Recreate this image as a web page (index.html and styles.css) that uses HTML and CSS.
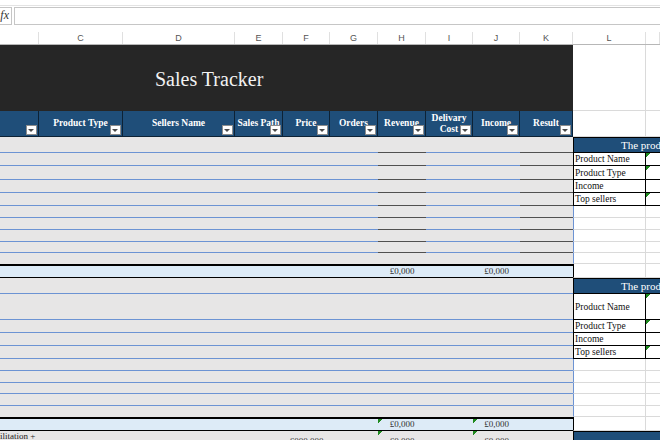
FILE: index.html
```html
<html>
  <head>
    <meta charset="utf-8" />
    <link rel="stylesheet" href="styles.css">
  </head>
  <body>
    <div class="fbar">
      <div class="fx">fx</div>
      <div class="finput"></div>
    </div>

    <div class="row cols">
      <div></div><div>C</div><div>D</div><div>E</div><div>F</div><div>G</div>
      <div>H</div><div>I</div><div>J</div><div>K</div><div>L</div><div></div>
    </div>

    <div class="row h66">
      <div class="title">Sales Tracker</div>
      <div class="gl"></div><div class="gm"></div>
    </div>

    <div class="row h26">
      <div class="th"><span class="dd"></span></div>
      <div class="th"><span class="tx">Product Type</span><span class="dd"></span></div>
      <div class="th"><span class="tx">Sellers Name</span><span class="dd"></span></div>
      <div class="th"><span class="tx">Sales Path</span><span class="dd"></span></div>
      <div class="th"><span class="tx">Price</span><span class="dd"></span></div>
      <div class="th"><span class="tx">Orders</span><span class="dd"></span></div>
      <div class="th"><span class="tx">Revenue</span><span class="dd"></span></div>
      <div class="th"><span class="tx">Delivary<br>Cost</span><span class="dd"></span></div>
      <div class="th"><span class="tx">Income</span><span class="dd"></span></div>
      <div class="th"><span class="tx">Result</span><span class="dd"></span></div>
      <div class="gl"></div><div class="gm"></div>
    </div>

    <!-- first block -->
    <div class="row h16">
      <div class="d s6"></div><div class="d dk"></div><div class="d s2"></div><div class="d dk"></div>
      <div class="ph">The product details</div>
    </div>
    <div class="row h13">
      <div class="d s6"></div><div class="d dk"></div><div class="d s2"></div><div class="d dk"></div>
      <div class="pl">Product Name</div><div class="pv tri"></div>
    </div>
    <div class="row h14">
      <div class="d s6"></div><div class="d dk"></div><div class="d s2"></div><div class="d dk"></div>
      <div class="pl">Product Type</div><div class="pv tri"></div>
    </div>
    <div class="row h13">
      <div class="d s6"></div><div class="d dk"></div><div class="d s2"></div><div class="d dk"></div>
      <div class="pl">Income</div><div class="pv"></div>
    </div>
    <div class="row h13">
      <div class="d s6"></div><div class="d dk"></div><div class="d s2"></div><div class="d dk"></div>
      <div class="pl">Top sellers</div><div class="pv tri"></div>
    </div>
    <div class="row h12">
      <div class="d s6"></div><div class="d dk"></div><div class="d s2"></div><div class="d dk"></div>
      <div class="gl bl"></div><div class="gm"></div>
    </div>
    <div class="row h12">
      <div class="d s6"></div><div class="d dk"></div><div class="d s2"></div><div class="d dk"></div>
      <div class="gl bl"></div><div class="gm"></div>
    </div>
    <div class="row h12">
      <div class="d s6"></div><div class="d dk"></div><div class="d s2"></div><div class="d dk"></div>
      <div class="gl bl"></div><div class="gm"></div>
    </div>
    <div class="row h11">
      <div class="d s6"></div><div class="d dk"></div><div class="d s2"></div><div class="d dk"></div>
      <div class="gl bl"></div><div class="gm"></div>
    </div>
    <div class="row h11">
      <div class="d nb s10"></div>
      <div class="gl bl"></div><div class="gm"></div>
    </div>
    <div class="row h14">
      <div class="t s6"></div><div class="t">£0,000</div><div class="t"></div><div class="t">£0,000</div><div class="t"></div>
      <div class="gl kl"></div><div class="gm"></div>
    </div>

    <!-- second block -->
    <div class="row h16">
      <div class="d s10"></div>
      <div class="ph">The product details</div>
    </div>
    <div class="row h26">
      <div class="d s10"></div>
      <div class="pl">Product Name</div><div class="pv tri"></div>
    </div>
    <div class="row h13">
      <div class="d s10"></div>
      <div class="pl">Product Type</div><div class="pv tri"></div>
    </div>
    <div class="row h13">
      <div class="d s10"></div>
      <div class="pl">Income</div><div class="pv"></div>
    </div>
    <div class="row h13">
      <div class="d s10"></div>
      <div class="pl">Top sellers</div><div class="pv tri"></div>
    </div>
    <div class="row h12">
      <div class="d s10"></div>
      <div class="gl bl"></div><div class="gm"></div>
    </div>
    <div class="row h12">
      <div class="d s10"></div>
      <div class="gl bl"></div><div class="gm"></div>
    </div>
    <div class="row h11">
      <div class="d s10"></div>
      <div class="gl bl"></div><div class="gm"></div>
    </div>
    <div class="row h12">
      <div class="d s10"></div>
      <div class="gl bl"></div><div class="gm"></div>
    </div>
    <div class="row h11">
      <div class="d nb s10"></div>
      <div class="gl bl"></div><div class="gm"></div>
    </div>
    <div class="row h14">
      <div class="t s6"></div><div class="t tri">£0,000</div><div class="t"></div><div class="t tri">£0,000</div><div class="t"></div>
      <div class="gl kl"></div><div class="gm"></div>
    </div>

    <!-- next block, cut by the window -->
    <div class="row h30">
      <div class="e fac">Facilitation +<br>Delivery</div>
      <div class="e s3"></div>
      <div class="e lv">£000,000</div>
      <div class="e"></div>
      <div class="e lv tri">£0,000</div>
      <div class="e"></div>
      <div class="e lv tri">£0,000</div>
      <div class="e"></div>
      <div class="ph ph3">The product details</div>
    </div>
  </body>
</html>
```

FILE: styles.css
```css
body {
  margin: 0;
  width: 660px;
  height: 440px;
  overflow: hidden;
  background: #fff;
  font-family: "Liberation Serif", serif;
}

/* formula bar */
.fbar {
  display: flex;
  margin-top: 5px;
  border-top: 1px solid #e3e3e3;
  padding: 1px 0 7px;
}
.fx {
  box-sizing: border-box;
  width: 12px;
  height: 18px;
  border: 1px solid #c6c6c6;
  border-left: 0;
  font: italic 12px "Liberation Serif", serif;
  color: #333;
  text-align: right;
  padding-right: 2px;
  line-height: 15px;
  overflow: hidden;
  white-space: nowrap;
  text-indent: -6px;
}
.finput {
  flex: 1;
  box-sizing: border-box;
  height: 18px;
  margin-left: 2px;
  border: 1px solid #c6c6c6;
  border-right: 0;
}

/* sheet grid */
.row {
  display: grid;
  grid-template-columns: 39px 84px 112px 48px 47px 48px 48px 47px 47px 53px 73px 14px;
}
.row > div {
  box-sizing: border-box;
  overflow: hidden;
  white-space: nowrap;
  min-width: 0;
}
.h11 { height: 11px; }
.h12 { height: 12px; }
.h13 { height: 13px; }
.h14 { height: 14px; }
.h16 { height: 16px; }
.h26 { height: 26px; }
.h30 { height: 30px; }
.h66 { height: 66px; }

.s2 { grid-column: span 2; }
.s3 { grid-column: span 3; }
.s6 { grid-column: span 6; }
.s10 { grid-column: span 10; }

.cols {
  height: 12px;
  border-bottom: 1px solid #b7b7b7;
  font: 9px "Liberation Sans", sans-serif;
  color: #555;
}
.cols > div {
  border-right: 1px solid #e0e0e0;
  text-align: center;
  line-height: 12px;
}

.title {
  grid-column: span 10;
  display: flex;
  align-items: center;
  padding: 2px 0 0 155px;
  background: #262626;
  color: #f2f2f2;
  font-size: 20px;
}

/* table header */
.th {
  position: relative;
  display: flex;
  align-items: center;
  background: #1f4e79;
  border-right: 1px solid #0d2235;
  border-bottom: 1px solid #0d2235;
  color: #fff;
  font-weight: bold;
  font-size: 9.5px;
}
.th .tx {
  width: 100%;
  text-align: center;
  line-height: 11px;
}
.dd {
  position: absolute;
  right: 1px;
  bottom: 1px;
  box-sizing: border-box;
  width: 11px;
  height: 10px;
  background: #fff;
  border: 1px solid #8c8c8c;
}
.dd::after {
  content: "";
  position: absolute;
  left: 1px;
  top: 3px;
  border-left: 3px solid transparent;
  border-right: 3px solid transparent;
  border-top: 3px solid #4a4a4a;
}

/* data rows */
.d {
  background: #e7e6e6;
  border-bottom: 1px solid #6c93d3;
}
.d.dk { border-bottom-color: #505050; }
.d.nb { border-bottom: 0; }

.t {
  background: #ddebf7;
  border-top: 2px solid #000;
  border-bottom: 1px solid #000;
  font-size: 9px;
  color: #333;
  text-align: center;
  line-height: 11px;
}

.e {
  background: #e7e6e6;
  font-size: 9px;
  color: #222;
}
.fac {
  text-indent: -13px;
  line-height: 9px;
  padding-top: 1px;
}
.lv {
  text-align: center;
  line-height: 10px;
  padding-top: 5px;
  color: #333;
}

/* empty cells on the right */
.gl {
  border-right: 1px solid #dadada;
  border-bottom: 1px solid #dadada;
}
.gl.bl { border-left: 1px solid #6c93d3; }
.gl.kl { border-left: 1px solid #000; }
.gm {
  border-bottom: 1px solid #dadada;
}

/* product details panels */
.ph {
  grid-column: span 2;
  display: flex;
  align-items: center;
  padding-left: 47px;
  background: #1f4e79;
  border-top: 1px solid #000;
  border-left: 1px solid #000;
  border-bottom: 1px solid #000;
  color: #fff;
  font-size: 11px;
}
.ph3 {
  align-items: flex-start;
  padding-top: 5px;
}
.pl {
  display: flex;
  align-items: center;
  padding-left: 1px;
  background: #fff;
  border-left: 1px solid #000;
  border-right: 1px solid #000;
  border-bottom: 1px solid #000;
  color: #111;
  font-size: 9.5px;
}
.pv {
  background: #fff;
  border-bottom: 1px solid #000;
}

.tri {
  background-image: linear-gradient(135deg, #1f8a1f 3px, transparent 3px);
  background-repeat: no-repeat;
}
```
